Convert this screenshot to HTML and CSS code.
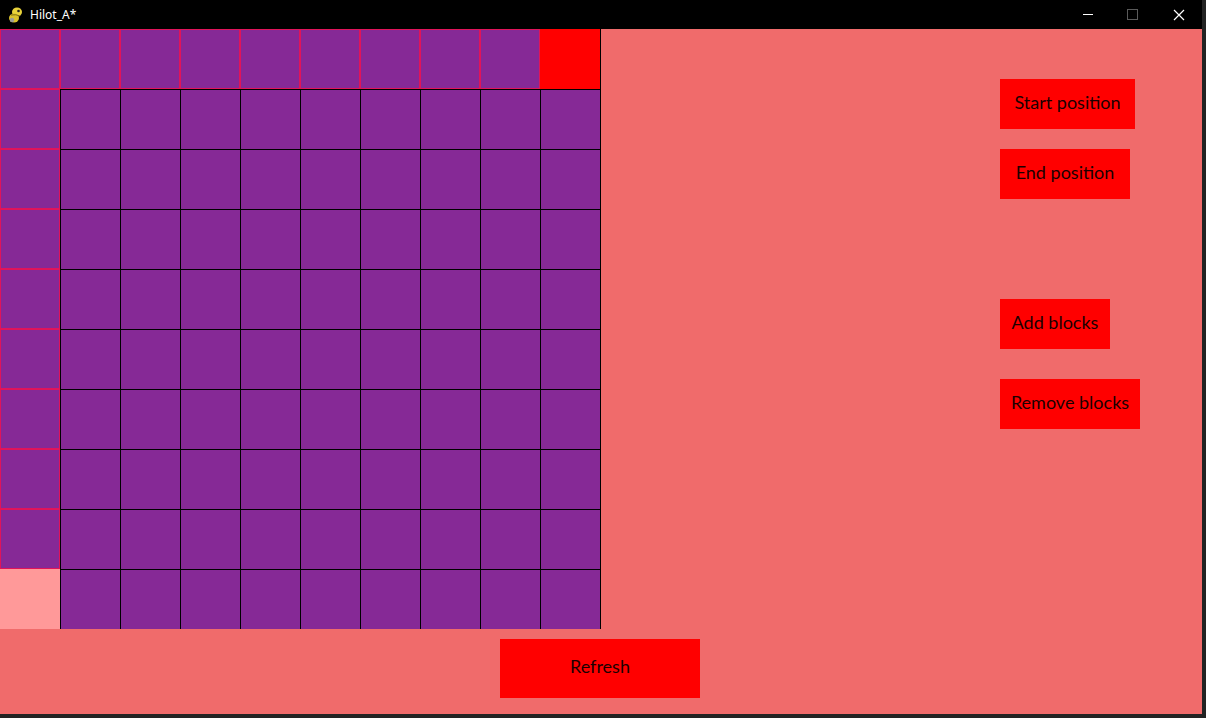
FILE: index.html
```html
<!DOCTYPE html>
<html>
<head>
<meta charset="utf-8">
<title>Hilot_A*</title>
<link rel="stylesheet" href="styles.css">
</head>
<body>
<div class="window">
  <div class="titlebar">
    <svg class="app-icon" width="16" height="18" viewBox="0 0 16 18">
      <ellipse cx="9" cy="6" rx="5" ry="4.5" fill="#e8d23a"/>
      <ellipse cx="6" cy="12" rx="5" ry="4.5" fill="#d9c12c"/>
      <circle cx="10.5" cy="5" r="1.3" fill="#222"/>
      <circle cx="4" cy="14" r="2.2" fill="#9a9a9a"/>
      <path d="M3 9 Q8 8 12 10" stroke="#7a6a10" stroke-width="1" fill="none"/>
    </svg>
    <span class="title">Hilot_A*</span>
    <div class="controls">
      <span class="ctl ctl-min"><span class="min-line"></span></span>
      <span class="ctl ctl-max"><span class="max-box"></span></span>
      <span class="ctl ctl-close">
        <svg width="12" height="12" viewBox="0 0 12 12"><path d="M1 1 L11 11 M11 1 L1 11" stroke="#fff" stroke-width="1.2"/></svg>
      </span>
    </div>
  </div>
  <div class="content">
    <div class="top">
      <div class="board">
        <div class="c p"></div><div class="c p"></div><div class="c p"></div><div class="c p"></div><div class="c p"></div><div class="c p"></div><div class="c p"></div><div class="c p"></div><div class="c p"></div><div class="c s"></div>
        <div class="c p"></div><div class="c"></div><div class="c"></div><div class="c"></div><div class="c"></div><div class="c"></div><div class="c"></div><div class="c"></div><div class="c"></div><div class="c"></div>
        <div class="c p"></div><div class="c"></div><div class="c"></div><div class="c"></div><div class="c"></div><div class="c"></div><div class="c"></div><div class="c"></div><div class="c"></div><div class="c"></div>
        <div class="c p"></div><div class="c"></div><div class="c"></div><div class="c"></div><div class="c"></div><div class="c"></div><div class="c"></div><div class="c"></div><div class="c"></div><div class="c"></div>
        <div class="c p"></div><div class="c"></div><div class="c"></div><div class="c"></div><div class="c"></div><div class="c"></div><div class="c"></div><div class="c"></div><div class="c"></div><div class="c"></div>
        <div class="c p"></div><div class="c"></div><div class="c"></div><div class="c"></div><div class="c"></div><div class="c"></div><div class="c"></div><div class="c"></div><div class="c"></div><div class="c"></div>
        <div class="c p"></div><div class="c"></div><div class="c"></div><div class="c"></div><div class="c"></div><div class="c"></div><div class="c"></div><div class="c"></div><div class="c"></div><div class="c"></div>
        <div class="c p"></div><div class="c"></div><div class="c"></div><div class="c"></div><div class="c"></div><div class="c"></div><div class="c"></div><div class="c"></div><div class="c"></div><div class="c"></div>
        <div class="c p"></div><div class="c"></div><div class="c"></div><div class="c"></div><div class="c"></div><div class="c"></div><div class="c"></div><div class="c"></div><div class="c"></div><div class="c"></div>
        <div class="c e"></div><div class="c"></div><div class="c"></div><div class="c"></div><div class="c"></div><div class="c"></div><div class="c"></div><div class="c"></div><div class="c"></div><div class="c"></div>
      </div>
      <div class="panel">
        <div class="btn btn-start">Start position</div>
        <div class="btn btn-end">End position</div>
        <div class="btn btn-add">Add blocks</div>
        <div class="btn btn-remove">Remove blocks</div>
      </div>
    </div>
    <div class="bottom">
      <div class="btn btn-refresh">Refresh</div>
    </div>
  </div>
</div>
</body>
</html>
```
FILE: styles.css
```css
html, body {
  margin: 0;
  padding: 0;
}
body {
  width: 1206px;
  height: 718px;
  overflow: hidden;
  background: #232323;
  font-family: "Lato", "Liberation Sans", sans-serif;
}
.window {
  width: 1202px;
  display: flex;
  flex-direction: column;
}
.titlebar {
  height: 29px;
  background: #000;
  display: flex;
  align-items: center;
  color: #fff;
}
.app-icon {
  margin-left: 8px;
  margin-right: 6px;
}
.title {
  font-family: "Noto Sans", "Liberation Sans", sans-serif;
  font-size: 12px;
}
.controls {
  margin-left: auto;
  display: flex;
  height: 29px;
}
.ctl {
  width: 45px;
  height: 29px;
  display: flex;
  align-items: center;
  justify-content: center;
}
.min-line {
  width: 10px;
  height: 1px;
  background: #fff;
}
.max-box {
  width: 9px;
  height: 9px;
  border: 1px solid #5a5a5a;
}
.ctl-close {
  width: 47px;
}
.content {
  height: 685px;
  background: #f06b6b;
  display: flex;
  flex-direction: column;
}
.top {
  display: flex;
}
.board {
  display: grid;
  grid-template-columns: repeat(10, 60px);
  grid-template-rows: repeat(10, 60px);
  border-right: 1px solid #000;
}
.c {
  box-sizing: border-box;
  background: #862996;
  border-left: 1px solid #000;
  border-top: 1px solid #000;
}
.c.p {
  border: 1px solid #e0145a;
}
.c.s {
  background: #ff0000;
  border: none;
}
.c.e {
  background: #ff9999;
  border: none;
}
.panel {
  margin-left: 399px;
  padding-top: 50px;
  display: flex;
  flex-direction: column;
  align-items: flex-start;
}
.btn {
  box-sizing: border-box;
  background: #ff0000;
  color: #1a0000;
  height: 50px;
  padding-bottom: 4px;
  display: flex;
  align-items: center;
  justify-content: center;
  font-size: 18px;
}
.btn-start { width: 135px; }
.btn-end { width: 130px; margin-top: 20px; }
.btn-add { width: 110px; margin-top: 100px; }
.btn-remove { width: 140px; margin-top: 30px; }
.bottom {
  padding-left: 500px;
  padding-top: 10px;
}
.btn-refresh {
  width: 200px;
  height: 59px;
  padding-bottom: 6px;
}
```
